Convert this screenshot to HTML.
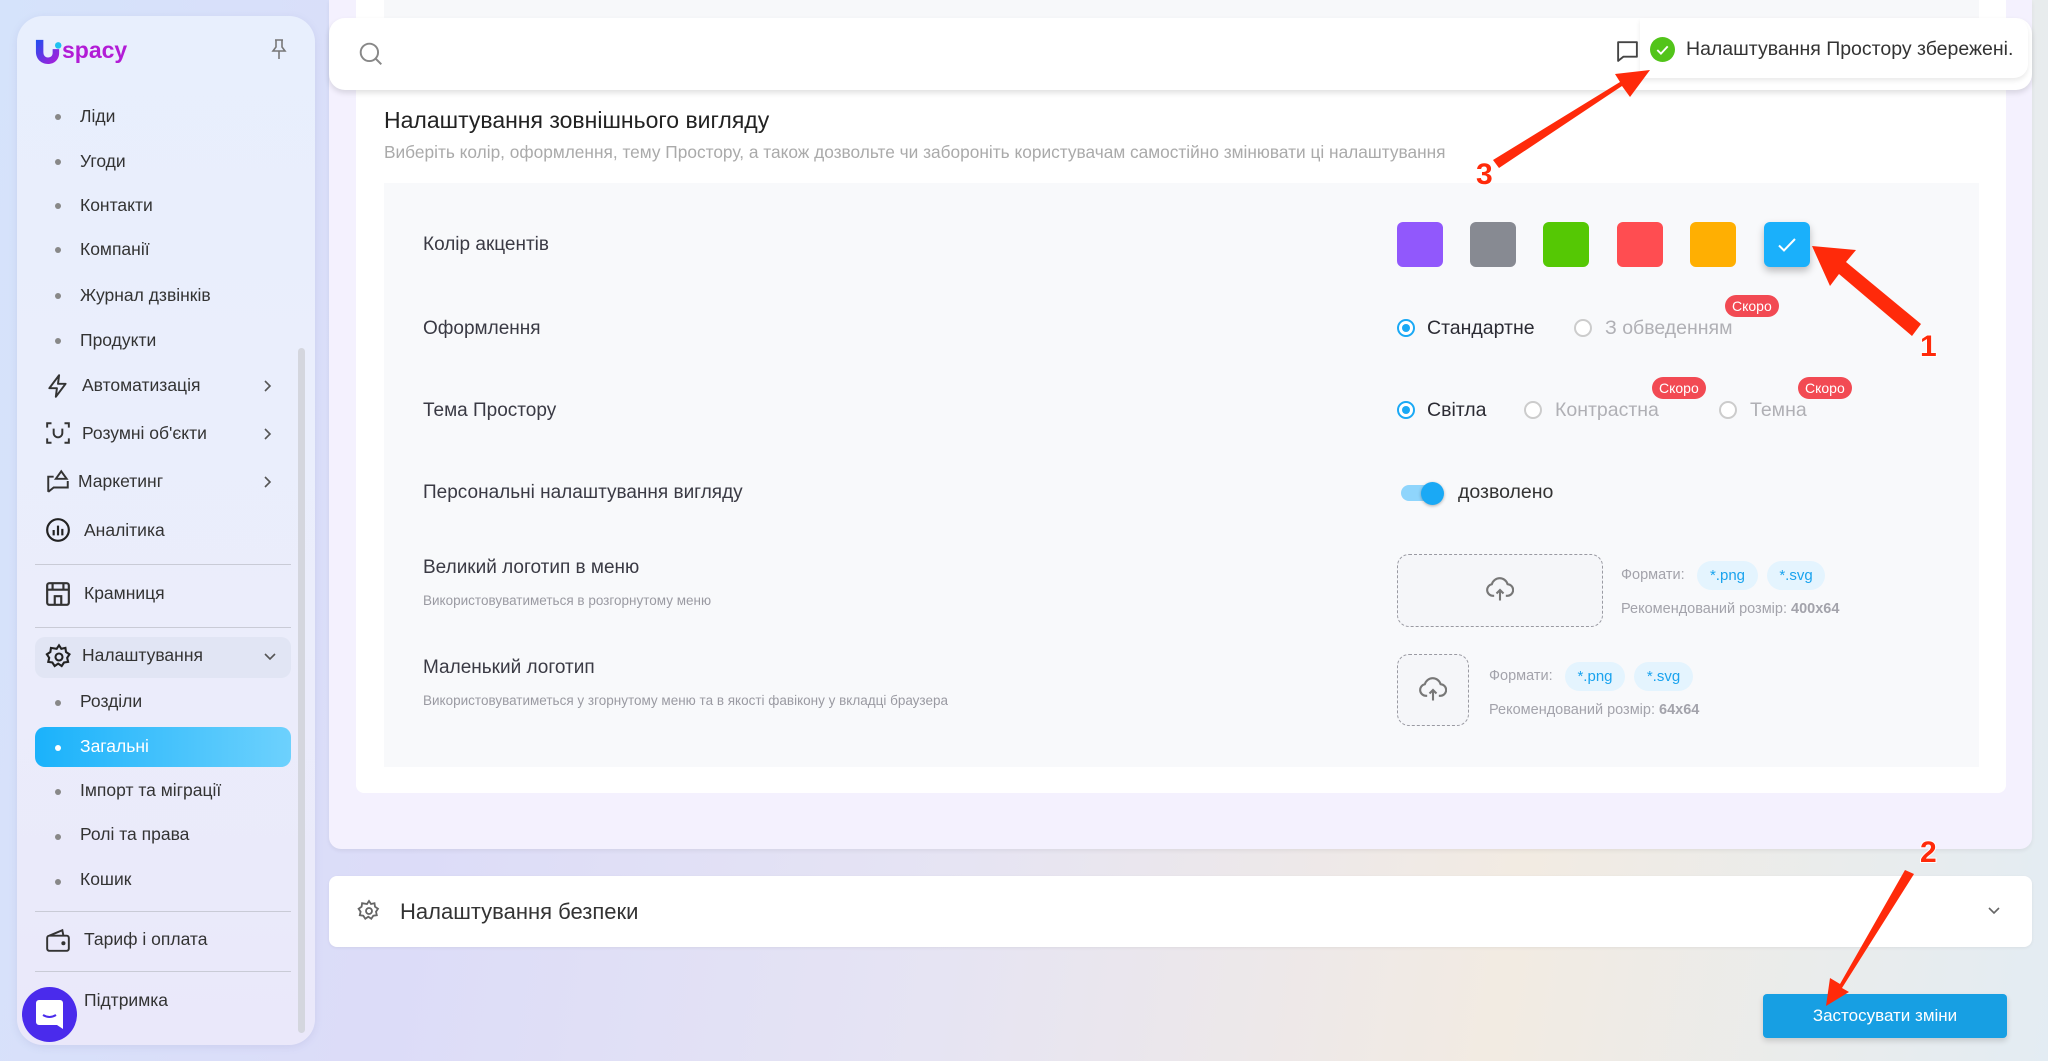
<!DOCTYPE html>
<html><head><meta charset="utf-8">
<style>
*{box-sizing:border-box;margin:0;padding:0}
body{width:2048px;height:1061px;overflow:hidden;position:relative;font-family:"Liberation Sans","Noto Sans CJK SC",sans-serif;color:#2b2b33;
background:linear-gradient(100deg,#d5e3fb 0%,#dcdcf8 25%,#e6e4f3 50%,#f2ebe2 75%,#e3ecf3 100%);}
.abs{position:absolute}
.side{left:17px;top:16px;width:298px;height:1029px;border-radius:26px;background:linear-gradient(180deg,#e8effd,#ebedfb 60%,#eae8fa);box-shadow:0 2px 8px rgba(120,120,180,.15)}
.nav{position:absolute;left:0;font-size:17.5px;color:#333}
.sub{left:80px}
.dot{position:absolute;left:55px;width:6px;height:6px;border-radius:50%;background:#888}
.ico{position:absolute;left:45px}
.chev{position:absolute;left:262px}
.div{position:absolute;left:35px;width:256px;height:1px;background:#c9cbd6}
.lbl{position:absolute;left:423px;font-size:19px;color:#3a3a44}
.sm{position:absolute;font-size:13.5px;color:#9a9aa2}
.radio{position:absolute;width:18px;height:18px;border-radius:50%;border:2px solid #ccc;background:#fff}
.radio.on{border-color:#1aa9f5}
.radio.on::after{content:"";position:absolute;left:3px;top:3px;width:8px;height:8px;border-radius:50%;background:#1aa9f5}
.rt{position:absolute;font-size:19.5px}
.badge{position:absolute;height:22px;padding:0 7px;border-radius:11px;background:#f24a53;color:#fff;font-size:14px;line-height:22px}
.sw{position:absolute;top:222px;width:46px;height:45px;border-radius:6px}
.chip{position:absolute;height:29px;border-radius:15px;background:#e4f4fe;color:#1aa3ee;font-size:15px;line-height:29px;text-align:center}
.fmt{position:absolute;font-size:14.5px;color:#a3a3ab}
.up{position:absolute;border:1.5px dashed #9a9aa2;border-radius:12px;background:#f5f6f9}
</style></head><body>

<div class="abs side"></div>
<!-- logo -->
<svg class="abs" style="left:34px;top:38px" width="28" height="26" viewBox="0 0 30 28"><defs><linearGradient id="g" x1="0" y1="0" x2="1" y2="1"><stop offset="0" stop-color="#1d4ff0"/><stop offset="1" stop-color="#b51ad8"/></linearGradient></defs><path d="M2 2h8v13c0 4 2 6 5 6s5-2 5-5v-4h7v4c0 7-5 12-12 12S2 23 2 15z" fill="url(#g)"/><circle cx="26" cy="8" r="3.5" fill="#1fc1f0"/></svg>
<div class="abs" style="left:62px;top:37px;font-size:23px;font-weight:bold;color:#b21cd6;letter-spacing:0px">spacy</div>
<svg class="abs" style="left:269px;top:38px" width="20" height="22" viewBox="0 0 20 22" fill="none" stroke="#777" stroke-width="1.6"><path d="M6 2h8M7 2v7l-3 4h12l-3-4V2M10 13v8"/></svg>

<div class="dot" style="top:114px"></div><div class="nav sub" style="top:106px">Ліди</div>
<div class="dot" style="top:159px"></div><div class="nav sub" style="top:151px">Угоди</div>
<div class="dot" style="top:203px"></div><div class="nav sub" style="top:195px">Контакти</div>
<div class="dot" style="top:247px"></div><div class="nav sub" style="top:239px">Компанії</div>
<div class="dot" style="top:293px"></div><div class="nav sub" style="top:285px">Журнал дзвінків</div>
<div class="dot" style="top:338px"></div><div class="nav sub" style="top:330px">Продукти</div>

<svg class="ico" style="top:373px" width="26" height="26" viewBox="0 0 24 24" fill="none" stroke="#333" stroke-width="1.8" stroke-linejoin="round"><path d="M13 2L4 14h7l-1 8 9-12h-7z"/></svg>
<div class="nav" style="left:82px;top:375px">Автоматизація</div>
<svg class="chev" style="top:379px" width="10" height="14" viewBox="0 0 10 14" fill="none" stroke="#555" stroke-width="1.6"><path d="M3 2l5 5-5 5"/></svg>
<svg class="ico" style="top:420px" width="26" height="26" viewBox="0 0 24 24" fill="none" stroke="#333" stroke-width="1.8"><path d="M2 7V3h4M18 3h4v4M22 17v4h-4M6 21H2v-4M8 8v4a4 4 0 008 0V8"/></svg>
<div class="nav" style="left:82px;top:423px">Розумні об'єкти</div>
<svg class="chev" style="top:427px" width="10" height="14" viewBox="0 0 10 14" fill="none" stroke="#555" stroke-width="1.6"><path d="M3 2l5 5-5 5"/></svg>
<svg class="ico" style="top:468px" width="26" height="26" viewBox="0 0 24 24" fill="none" stroke="#333" stroke-width="1.8"><path d="M3 22V8h5M3 22l5-4h13V12M10 10l5-7 5 7z"/></svg>
<div class="nav" style="left:78px;top:471px">Маркетинг</div>
<svg class="chev" style="top:475px" width="10" height="14" viewBox="0 0 10 14" fill="none" stroke="#555" stroke-width="1.6"><path d="M3 2l5 5-5 5"/></svg>
<svg class="ico" style="top:517px" width="26" height="26" viewBox="0 0 24 24" fill="none" stroke="#222" stroke-width="2"><circle cx="12" cy="12" r="10"/><path d="M8 12v5M12 8v9M16 11v6"/></svg>
<div class="nav" style="left:84px;top:520px">Аналітика</div>
<div class="div" style="top:564px"></div>
<svg class="ico" style="top:581px" width="26" height="26" viewBox="0 0 24 24" fill="none" stroke="#333" stroke-width="2"><rect x="2" y="2" width="20" height="20" rx="2"/><path d="M2 8h20M7 2v6M17 2v6M9 22v-8h6v8"/></svg>
<div class="nav" style="left:84px;top:583px">Крамниця</div>
<div class="div" style="top:627px"></div>
<div class="abs" style="left:35px;top:637px;width:256px;height:41px;border-radius:10px;background:#e1e5f4"></div>
<svg class="ico" style="top:643px" width="28" height="28" viewBox="0 0 24 24" fill="none" stroke="#222" stroke-width="1.8"><circle cx="12" cy="12" r="3"/><path d="M12 2l2 3 3.5-.8.5 3.5 3 2-2 3 .8 3.5-3.5.5-2 3-3-2-3 2-2-3-3.5-.5.8-3.5-2-3 3-2 .5-3.5L10 5z"/></svg>
<div class="nav" style="left:82px;top:645px">Налаштування</div>
<svg class="abs" style="left:263px;top:651px" width="14" height="10" viewBox="0 0 14 10" fill="none" stroke="#555" stroke-width="1.6"><path d="M2 3l5 5 5-5"/></svg>
<div class="dot" style="top:700px"></div><div class="nav sub" style="top:691px">Розділи</div>
<div class="abs" style="left:35px;top:727px;width:256px;height:40px;border-radius:10px;background:linear-gradient(90deg,#1ab2fb,#6dd1fd)"></div>
<div class="dot" style="top:745px;background:#fff"></div><div class="nav sub" style="top:736px;color:#fff">Загальні</div>
<div class="dot" style="top:789px"></div><div class="nav sub" style="top:780px">Імпорт та міграції</div>
<div class="dot" style="top:834px"></div><div class="nav sub" style="top:824px">Ролі та права</div>
<div class="dot" style="top:879px"></div><div class="nav sub" style="top:869px">Кошик</div>
<div class="div" style="top:911px"></div>
<svg class="ico" style="top:927px" width="26" height="26" viewBox="0 0 24 24" fill="none" stroke="#333" stroke-width="1.8"><rect x="2" y="8" width="20" height="14" rx="2"/><path d="M4 8l12-5 1 5"/><circle cx="17" cy="15" r="1" fill="#333"/></svg>
<div class="nav" style="left:84px;top:929px">Тариф і оплата</div>
<div class="div" style="top:971px"></div>
<div class="nav" style="left:84px;top:990px">Підтримка</div>
<div class="abs" style="left:22px;top:987px;width:55px;height:55px;border-radius:50%;background:#4a2bec"></div>
<svg class="abs" style="left:36px;top:1000px" width="27" height="29" viewBox="0 0 27 29"><path d="M3 0h21a3 3 0 013 3v26l-6-4H3a3 3 0 01-3-3V3a3 3 0 013-3z" fill="#fff"/><path d="M7 15q6.5 4 13 0" stroke="#4a2bec" stroke-width="2" fill="none"/></svg>
<div class="abs" style="left:298px;top:348px;width:7px;height:685px;border-radius:4px;background:#d4d6de"></div>

<!-- main panel -->
<div class="abs" style="left:329px;top:0;width:1703px;height:849px;border-radius:0 0 12px 12px;background:#f4f1fe;box-shadow:0 2px 4px rgba(0,0,0,.06)"></div>
<div class="abs" style="left:356px;top:0;width:1650px;height:793px;border-radius:0 0 8px 8px;background:#fff"></div>
<div class="abs" style="left:384px;top:0;width:1595px;height:18px;background:#f7f8fa"></div>
<div class="abs" style="left:384px;top:183px;width:1595px;height:584px;background:#f8f9fb"></div>

<!-- top bar -->
<div class="abs" style="left:329px;top:18px;width:1703px;height:72px;border-radius:16px;background:#fff;box-shadow:0 3px 6px rgba(0,0,0,.12)"></div>
<svg class="abs" style="left:358px;top:41px" width="26" height="26" viewBox="0 0 24 24" fill="none" stroke="#888" stroke-width="1.8"><circle cx="10.5" cy="10.5" r="8"/><path d="M16.5 16.5l5 5"/></svg>
<svg class="abs" style="left:1615px;top:39px" width="25" height="25" viewBox="0 0 24 24" fill="none" stroke="#444" stroke-width="1.8" stroke-linejoin="round"><path d="M3 3h18v14H8l-5 4z"/></svg>
<div class="abs" style="left:1640px;top:18px;width:388px;height:60px;border-radius:0 14px 14px 0;background:#fff;box-shadow:0 3px 5px rgba(0,0,0,.08)"></div>
<svg class="abs" style="left:1650px;top:37px" width="25" height="25" viewBox="0 0 24 24"><circle cx="12" cy="12" r="12" fill="#52c41a"/><path d="M7 12.5l3.5 3.5 6.5-7" stroke="#fff" stroke-width="1.8" fill="none"/></svg>
<div class="abs" style="left:1686px;top:38px;font-size:19.5px;color:#333">Налаштування Простору збережені.</div>

<!-- heading -->
<div class="abs" style="left:384px;top:107px;font-size:23px;color:#222">Налаштування зовнішнього вигляду</div>
<div class="abs" style="left:384px;top:142px;font-size:17.3px;color:#aaa">Виберіть колір, оформлення, тему Простору, а також дозвольте чи забороніть користувачам самостійно змінювати ці налаштування</div>

<div class="lbl" style="top:234px">Колір акцентів</div>
<div class="sw" style="left:1397px;background:#9158fc"></div>
<div class="sw" style="left:1470px;background:#878a92"></div>
<div class="sw" style="left:1543px;background:#55c804"></div>
<div class="sw" style="left:1617px;background:#ff4d51"></div>
<div class="sw" style="left:1690px;background:#ffaf02"></div>
<div class="sw" style="left:1764px;background:#1ab0fb;box-shadow:0 4px 8px rgba(0,0,0,.25)"></div>
<svg class="abs" style="left:1775px;top:233px" width="24" height="24" viewBox="0 0 24 24" fill="none" stroke="#fff" stroke-width="2"><path d="M4 12.5l5 5L20 6"/></svg>

<div class="lbl" style="top:318px">Оформлення</div>
<div class="radio on" style="left:1397px;top:319px"></div><div class="rt" style="left:1427px;top:317px">Стандартне</div>
<div class="radio" style="left:1574px;top:319px"></div><div class="rt" style="left:1605px;top:317px;color:#b0b0b5">З обведенням</div>
<div class="badge" style="left:1725px;top:295px">Скоро</div>

<div class="lbl" style="top:400px">Тема Простору</div>
<div class="radio on" style="left:1397px;top:401px"></div><div class="rt" style="left:1427px;top:399px">Світла</div>
<div class="radio" style="left:1524px;top:401px"></div><div class="rt" style="left:1555px;top:399px;color:#b0b0b5">Контрастна</div>
<div class="badge" style="left:1652px;top:377px">Скоро</div>
<div class="radio" style="left:1719px;top:401px"></div><div class="rt" style="left:1750px;top:399px;color:#b0b0b5">Темна</div>
<div class="badge" style="left:1798px;top:377px">Скоро</div>

<div class="lbl" style="top:482px">Персональні налаштування вигляду</div>
<div class="abs" style="left:1401px;top:485px;width:38px;height:16px;border-radius:8px;background:#8fd5fc"></div>
<div class="abs" style="left:1421px;top:482px;width:23px;height:23px;border-radius:50%;background:#1aa9f5;box-shadow:0 1px 3px rgba(0,0,0,.3)"></div>
<div class="rt" style="left:1458px;top:481px;color:#333">дозволено</div>

<div class="lbl" style="top:557px">Великий логотип в меню</div>
<div class="sm" style="left:423px;top:593px">Використовуватиметься в розгорнутому меню</div>
<div class="up" style="left:1397px;top:554px;width:206px;height:73px"></div>
<svg class="abs" style="left:1486px;top:577px" width="28" height="26" viewBox="0 0 24 22" fill="none" stroke="#777" stroke-width="1.8"><path d="M7 16H6a5 5 0 01-1-9.9A7 7 0 0118.5 6 5 5 0 0118 16h-1M12 20v-9M9 14l3-3 3 3"/></svg>
<div class="fmt" style="left:1621px;top:567px">Формати:</div>
<div class="chip" style="left:1697px;top:561px;width:61px">*.png</div>
<div class="chip" style="left:1767px;top:561px;width:58px">*.svg</div>
<div class="fmt" style="left:1621px;top:601px">Рекомендований розмір: <b>400x64</b></div>

<div class="lbl" style="top:657px">Маленький логотип</div>
<div class="sm" style="left:423px;top:693px">Використовуватиметься у згорнутому меню та в якості фавікону у вкладці браузера</div>
<div class="up" style="left:1397px;top:654px;width:72px;height:72px"></div>
<svg class="abs" style="left:1419px;top:677px" width="28" height="26" viewBox="0 0 24 22" fill="none" stroke="#777" stroke-width="1.8"><path d="M7 16H6a5 5 0 01-1-9.9A7 7 0 0118.5 6 5 5 0 0118 16h-1M12 20v-9M9 14l3-3 3 3"/></svg>
<div class="fmt" style="left:1489px;top:668px">Формати:</div>
<div class="chip" style="left:1565px;top:662px;width:60px">*.png</div>
<div class="chip" style="left:1634px;top:662px;width:59px">*.svg</div>
<div class="fmt" style="left:1489px;top:702px">Рекомендований розмір: <b>64x64</b></div>

<!-- security -->
<div class="abs" style="left:329px;top:876px;width:1703px;height:71px;border-radius:8px;background:#fff;box-shadow:0 1px 3px rgba(0,0,0,.06)"></div>
<svg class="abs" style="left:357px;top:899px" width="24" height="24" viewBox="0 0 24 24" fill="none" stroke="#666" stroke-width="1.8"><circle cx="12" cy="12" r="3"/><path d="M12 2l2 3 3.5-.8.5 3.5 3 2-2 3 .8 3.5-3.5.5-2 3-3-2-3 2-2-3-3.5-.5.8-3.5-2-3 3-2 .5-3.5L10 5z"/></svg>
<div class="abs" style="left:400px;top:899px;font-size:22px;color:#333">Налаштування безпеки</div>
<svg class="abs" style="left:1987px;top:906px" width="14" height="10" viewBox="0 0 14 10" fill="none" stroke="#666" stroke-width="1.6"><path d="M2 2l5 5 5-5"/></svg>

<div class="abs" style="left:1763px;top:994px;width:244px;height:44px;border-radius:4px;background:#179fe3;box-shadow:0 3px 6px rgba(0,0,0,.15);color:#fff;font-size:17px;text-align:center;line-height:44px">Застосувати зміни</div>

<!-- annotations -->
<svg class="abs" style="left:0;top:0" width="2048" height="1061" viewBox="0 0 2048 1061">
<g fill="#ff2a0a">
<path d="M1921 324 L1846 262 L1856 250 L1812 246 L1830 286 L1839 274 L1912 336z"/>
<path d="M1905 870 L1840 984 L1830 978 L1826 1006 L1849 992 L1842 988 L1914 874z"/>
<path d="M1499 168 L1622 86 L1630 97 L1650 70 L1615 74 L1620 82 L1493 160z"/>
</g>
<g font-family="Liberation Sans,sans-serif" font-weight="bold" font-size="30" fill="#ff2a0a" stroke="#fff" stroke-width="2" paint-order="stroke">
<text x="1920" y="356">1</text><text x="1920" y="862">2</text><text x="1476" y="184">3</text></g>
</svg>
</body></html>
